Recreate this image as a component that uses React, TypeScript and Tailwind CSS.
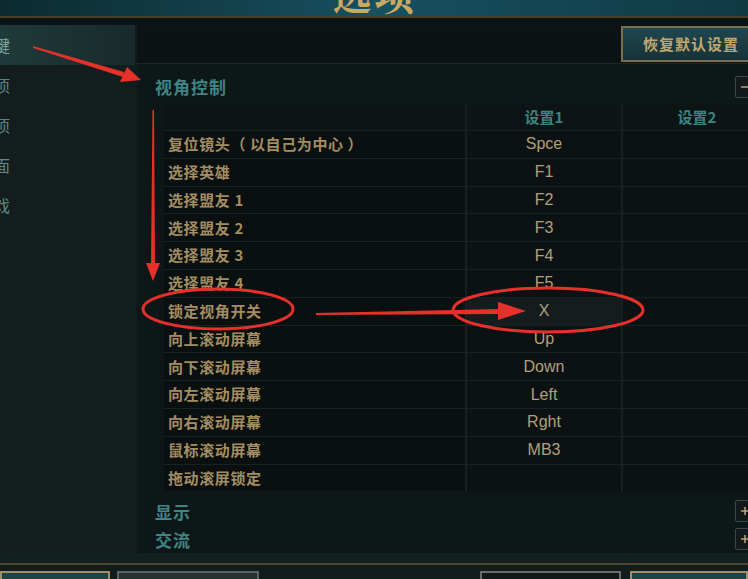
import { Minus, Plus } from "lucide-react";

const rows: [string, string][] = [
  ["复位镜头（ 以自己为中心 ）", "Spce"],
  ["选择英雄", "F1"],
  ["选择盟友 1", "F2"],
  ["选择盟友 2", "F3"],
  ["选择盟友 3", "F4"],
  ["选择盟友 4", "F5"],
  ["锁定视角开关", "X"],
  ["向上滚动屏幕", "Up"],
  ["向下滚动屏幕", "Down"],
  ["向左滚动屏幕", "Left"],
  ["向右滚动屏幕", "Rght"],
  ["鼠标滚动屏幕", "MB3"],
  ["拖动滚屏锁定", ""],
];

const navItems = ["热键", "声音选项", "语音选项", "界面", "游戏"];

const App = () => {
  return (
    <div className="relative w-[748px] h-[579px] overflow-hidden bg-[#121c1c] font-['Noto_Sans_CJK_SC','Liberation_Sans',sans-serif]">
      {/* Title banner */}
      <div className="h-[16px] overflow-hidden bg-gradient-to-r from-[#0c2a30] via-[#175060] to-[#0f3a44] flex justify-center">
        <div className="-mt-[27px] text-[40px] leading-none font-bold text-[#c9a862] tracking-[2px] font-['Noto_Serif_CJK_SC','Noto_Sans_CJK_SC',serif]">
          选项
        </div>
      </div>
      <div className="h-[2px] bg-[#4a3e26]" />
      <div className="h-[7px] bg-[#0d1415]" />

      <div className="flex h-[528px]">
        {/* Sidebar */}
        <div className="w-[135px] shrink-0 bg-[#141d1e] overflow-hidden">
          {navItems.map((item, i) => (
            <div
              key={item}
              className={`h-[40px] flex items-center ${i === 0 ? "bg-gradient-to-r from-[#1f3a3a] to-[#182a2b]" : ""}`}
            >
              <div
                className={`w-[10px] flex justify-end whitespace-nowrap text-[16px] ${i === 0 ? "text-[#7fa59c]" : "text-[#5f8883]"}`}
              >
                {item}
              </div>
            </div>
          ))}
        </div>

        {/* Main panel */}
        <div className="ml-[2px] w-[640px] shrink-0 bg-[#0e1718]">
          <div className="h-[38px] bg-[#0c1314] flex justify-end items-center pr-[14px]">
            <button className="w-[142px] h-[36px] border-2 border-[#7e6f4c] bg-gradient-to-b from-[#1f4750] to-[#163238] text-[15px] font-bold tracking-[1px] text-[#c4a66c] pr-[2px]">
              恢复默认设置
            </button>
          </div>
          <div className="h-px bg-[#1c2627]" />

          <div className="h-[40px] flex items-center justify-between pl-[18px] pr-[22px] pt-[5px]">
            <span className="text-[17px] font-bold tracking-[1px] text-[#3e8584]">视角控制</span>
            <span className="w-[20px] h-[22px] border border-[#3e4647] rounded-[2px] bg-[#121a1b] flex items-center justify-center text-[#b8a57a]">
              <Minus size={12} strokeWidth={3} />
            </span>
          </div>

          <div className="ml-[27px]">
            <div className="flex h-[26px] gap-[2px] bg-[#162022]">
              <div className="w-[301px] bg-[#0d1415]" />
              <div className="w-[154px] bg-[#0d1415] flex items-center justify-center text-[15px] font-bold text-[#3a8483]">
                设置1
              </div>
              <div className="w-[148px] bg-[#0d1415] flex items-center justify-center text-[15px] font-bold text-[#3a8483]">
                设置2
              </div>
            </div>
            {rows.map(([label, key]) => (
              <div key={label} className="flex h-[27.8px] gap-[2px] bg-[#172022] border-t border-[#182223]">
                <div className="w-[301px] bg-[#0a0f10] flex items-center pl-[4px] text-[15px] font-bold tracking-[0.6px] text-[#a48d61] whitespace-pre">
                  {label}
                </div>
                <div
                  className={`w-[154px] flex items-center justify-center text-[16px] text-[#b1a07a] font-['Liberation_Sans',sans-serif] ${key === "X" ? "bg-[#141c1e]" : "bg-[#0c1213]"}`}
                >
                  {key}
                </div>
                <div className="w-[148px] bg-[#0c1213]" />
              </div>
            ))}
          </div>

          <div className="mt-[3px]">
            {["显示", "交流"].map((s) => (
              <div key={s} className="h-[28px] flex items-center justify-between pl-[18px] pr-[22px] pt-[6px]">
                <span className="text-[17px] font-bold tracking-[1px] text-[#3e8584]">{s}</span>
                <span className="w-[20px] h-[22px] border border-[#3e4647] rounded-[2px] bg-[#121a1b] flex items-center justify-center text-[#b8a57a]">
                  <Plus size={12} strokeWidth={3} />
                </span>
              </div>
            ))}
          </div>
        </div>
      </div>

      <div className="h-[10px] bg-[#132020]" />
      <div className="h-[2px] bg-[#4d4630]" />
      <div className="flex pt-[6px]">
        <div className="w-[111px] h-[30px] border-2 border-[#9d9068] bg-[#1d4443]" />
        <div className="ml-[7px] w-[144px] h-[30px] border-2 border-[#5a6262] bg-[#263131]" />
        <div className="ml-[221px] w-[143px] h-[30px] border-2 border-[#6a6c6a] bg-[#111919]" />
        <div className="ml-[9px] w-[120px] h-[30px] border-2 border-[#9d9068] bg-[#1d4443]" />
      </div>

      {/* Red annotations */}
      <svg className="absolute inset-0 pointer-events-none" width="748" height="579" viewBox="0 0 748 579">
        <g fill="#e8302b" stroke="none">
          <polygon points="33,46 124,72 123,77 33,48" />
          <polygon points="141,80 120,82 127,67" />
          <polygon points="152.5,110 154,110 155,264 151,264" />
          <polygon points="146,263 160,263 153,281" />
          <polygon points="316,313 500,309 500,314 316,315" />
          <polygon points="498,302 526,311 498,320" />
        </g>
        <g fill="none" stroke="#e8302b" strokeWidth="3">
          <ellipse cx="218" cy="309" rx="75" ry="20" />
          <ellipse cx="548" cy="310" rx="95" ry="22" />
        </g>
      </svg>
    </div>
  );
};

export default App;
